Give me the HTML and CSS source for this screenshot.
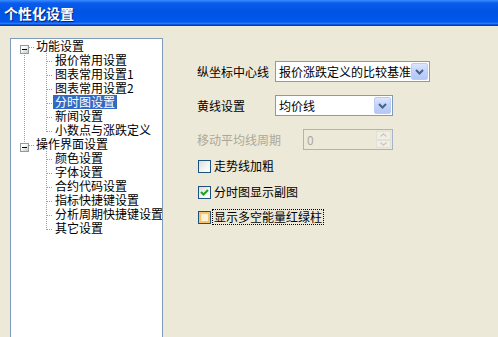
FILE: index.html
```html
<!DOCTYPE html>
<html lang="zh">
<head>
<meta charset="utf-8">
<title>个性化设置</title>
<link rel="stylesheet" href="styles.css">
</head>
<body>
<div class="titlebar"><span class="title">个性化设置</span></div>
<div class="main">
  <div class="tree">
    <div class="row root first">
      <span class="exp"></span><span class="stub"></span><span class="label">功能设置</span>
    </div>
    <div class="row child rl"><span class="label">报价常用设置</span></div>
    <div class="row child rl"><span class="label">图表常用设置1</span></div>
    <div class="row child rl"><span class="label">图表常用设置2</span></div>
    <div class="row child rl"><span class="label sel">分时图设置</span></div>
    <div class="row child rl"><span class="label">新闻设置</span></div>
    <div class="row child rl last"><span class="label">小数点与涨跌定义</span></div>
    <div class="row root second">
      <span class="exp"></span><span class="stub"></span><span class="label">操作界面设置</span>
    </div>
    <div class="row child"><span class="label">颜色设置</span></div>
    <div class="row child"><span class="label">字体设置</span></div>
    <div class="row child"><span class="label">合约代码设置</span></div>
    <div class="row child"><span class="label">指标快捷键设置</span></div>
    <div class="row child"><span class="label">分析周期快捷键设置</span></div>
    <div class="row child last"><span class="label">其它设置</span></div>
  </div>
  <div class="form">
    <div class="frow">
      <span class="flabel">纵坐标中心线</span>
      <div class="combo wide"><span class="ctext">报价涨跌定义的比较基准</span><span class="cbtn"><svg width="9" height="6" viewBox="0 0 9 6"><path d="M1 1 L4.5 4.5 L8 1" fill="none" stroke="#4D6185" stroke-width="2"/></svg></span></div>
    </div>
    <div class="frow">
      <span class="flabel">黄线设置</span>
      <div class="combo narrow"><span class="ctext">均价线</span><span class="cbtn"><svg width="9" height="6" viewBox="0 0 9 6"><path d="M1 1 L4.5 4.5 L8 1" fill="none" stroke="#4D6185" stroke-width="2"/></svg></span></div>
    </div>
    <div class="frow">
      <span class="flabel dis long">移动平均线周期</span>
      <div class="spin"><span class="stext">0</span><span class="sbtns"><span class="sb"><svg width="7" height="4" viewBox="0 0 7 4"><path d="M0.5 3.5 L3.5 0.8 L6.5 3.5" fill="none" stroke="#C9C7BA" stroke-width="1.2"/></svg></span><span class="sb"><svg width="7" height="4" viewBox="0 0 7 4"><path d="M0.5 0.5 L3.5 3.2 L6.5 0.5" fill="none" stroke="#C9C7BA" stroke-width="1.2"/></svg></span></span></div>
    </div>
    <div class="crow c1"><span class="cbox"></span><span class="clabel">走势线加粗</span></div>
    <div class="crow c2"><span class="cbox"><svg width="11" height="11" viewBox="0 0 11 11"><path d="M2 5 L4.5 7.5 L9 3" fill="none" stroke="#21A121" stroke-width="2"/></svg></span><span class="clabel">分时图显示副图</span></div>
    <div class="crow c3"><span class="cbox hot"></span><span class="clabel focus">显示多空能量红绿柱</span></div>
  </div>
</div>
</body>
</html>
```
FILE: styles.css
```css
html, body {
  margin: 0;
  padding: 0;
  height: 100%;
  overflow: hidden;
}
body {
  background: #ECE9D8;
  font-family: "Noto Sans CJK SC", "DejaVu Sans", sans-serif;
  font-size: 12px;
  color: #000;
}
.titlebar {
  height: 26px;
  box-sizing: border-box;
  padding-left: 4px;
  display: flex;
  align-items: center;
  background: linear-gradient(to bottom, #3A8CFF 0%, #0A5CEC 12%, #0054E3 45%, #0058EE 85%, #2E7AF6 90%, #0042C8 96%, #0037B0 100%);
}
.title {
  color: #fff;
  font-weight: bold;
  font-size: 14px;
  text-shadow: 1px 1px 0 #0A1E6E;
}
.main {
  display: flex;
  align-items: stretch;
  padding: 12px 0 0 10px;
  height: calc(100% - 26px);
  box-sizing: border-box;
}
.tree {
  width: 151px;
  flex: none;
  border: 1px solid #7F9DB9;
  border-bottom: none;
  background: #fff;
  overflow: hidden;
}
.row {
  height: 14px;
  line-height: 14px;
  display: flex;
  align-items: center;
  white-space: nowrap;
  background-repeat: no-repeat;
}
.label {
  padding: 0 2px;
  height: 14px;
  line-height: 14px;
}
.sel {
  background: #316AC5;
  color: #fff;
}
.root {
  padding-left: 9px;
}
.exp {
  width: 9px;
  height: 9px;
  box-sizing: border-box;
  border: 1px solid #919B9C;
  background: linear-gradient(135deg, #fff 30%, #C4C8C6 100%);
  position: relative;
  margin-top: 6px;
  flex: none;
}
.exp::after {
  content: "";
  position: absolute;
  left: 1px;
  top: 3px;
  width: 5px;
  height: 1px;
  background: #000;
}
.stub {
  width: 5px;
  height: 1px;
  margin-top: 2px;
  background: repeating-linear-gradient(to right, #A0A0A0 0 1px, transparent 1px 2px);
  flex: none;
}
.first {
  background-image: repeating-linear-gradient(to bottom, #A0A0A0 0 1px, transparent 1px 2px);
  background-size: 1px 1px;
  background-position: 13px 13px;
}
.second {
  background-image: repeating-linear-gradient(to bottom, #A0A0A0 0 1px, transparent 1px 2px);
  background-size: 1px 5px;
  background-position: 13px 0;
}
.child {
  padding-left: 42px;
  background-image:
    repeating-linear-gradient(to bottom, #A0A0A0 0 1px, transparent 1px 2px),
    repeating-linear-gradient(to right, #A0A0A0 0 1px, transparent 1px 2px);
  background-size: 1px 14px, 6px 1px;
  background-position: 35px 0, 36px 8px;
}
.child.last {
  background-size: 1px 9px, 6px 1px;
}
.child.rl {
  background-image:
    repeating-linear-gradient(to bottom, #A0A0A0 0 1px, transparent 1px 2px),
    repeating-linear-gradient(to right, #A0A0A0 0 1px, transparent 1px 2px),
    repeating-linear-gradient(to bottom, #A0A0A0 0 1px, transparent 1px 2px);
  background-size: 1px 14px, 6px 1px, 1px 14px;
  background-position: 35px 0, 36px 8px, 13px 0;
}
.child.rl.last {
  background-size: 1px 9px, 6px 1px, 1px 14px;
}
.form {
  margin-left: 34px;
  padding-top: 23px;
  display: flex;
  flex-direction: column;
}
.frow {
  display: flex;
  align-items: center;
  height: 21px;
  margin-bottom: 13px;
}
.flabel {
  white-space: nowrap;
  line-height: 14px;
  width: 78px;
  flex: none;
}
.flabel.long {
  width: 106px;
}
.flabel.dis {
  color: #ACA899;
}
.combo {
  height: 21px;
  box-sizing: border-box;
  border: 1px solid #7F9DB9;
  background: #fff;
  display: flex;
  align-items: center;
  justify-content: space-between;
  padding: 1px;
}
.combo.wide { width: 155px; }
.combo.narrow { width: 118px; }
.ctext {
  padding-left: 2px;
  white-space: nowrap;
  line-height: 14px;
}
.cbtn {
  width: 17px;
  height: 17px;
  box-sizing: border-box;
  border: 1px solid #BBCBF5;
  border-radius: 2px;
  background: linear-gradient(to bottom, #DCE6FE 0%, #C1D3FB 50%, #B4C8F6 100%);
  display: flex;
  align-items: center;
  justify-content: center;
  flex: none;
}
.spin {
  width: 90px;
  height: 21px;
  box-sizing: border-box;
  border: 1px solid #A6B4C6;
  background: #ECE9D8;
  display: flex;
  align-items: center;
  justify-content: space-between;
  padding: 1px;
}
.stext {
  color: #ACA899;
  padding-left: 2px;
  line-height: 14px;
}
.sbtns {
  display: flex;
  flex-direction: column;
  width: 15px;
  height: 17px;
}
.sb {
  flex: 1;
  border: 1px solid #E3E1D6;
  display: flex;
  align-items: center;
  justify-content: center;
  background: #F0EFE6;
}
.crow {
  display: flex;
  align-items: center;
  height: 16px;
  margin-left: 1px;
}
.c1 { margin-top: -5px; }
.c2 { margin-top: 10px; }
.c3 { margin-top: 9px; }
.cbox {
  width: 13px;
  height: 13px;
  box-sizing: border-box;
  border: 1px solid #1C5180;
  background: linear-gradient(135deg, #DCDCD7 0%, #F5F5F2 60%, #fff 100%);
  display: flex;
  align-items: center;
  justify-content: center;
  flex: none;
}
.cbox.hot {
  box-shadow: inset 0 0 0 2px #F8C36A;
  background: linear-gradient(135deg, #FCE7BE 0%, #FFF7E8 100%);
}
.clabel {
  margin-left: 3px;
  white-space: nowrap;
  line-height: 14px;
}
.clabel.focus {
  outline: 1px dotted #000;
  outline-offset: 0;
  padding: 0 1px;
  margin-left: 2px;
}
```
